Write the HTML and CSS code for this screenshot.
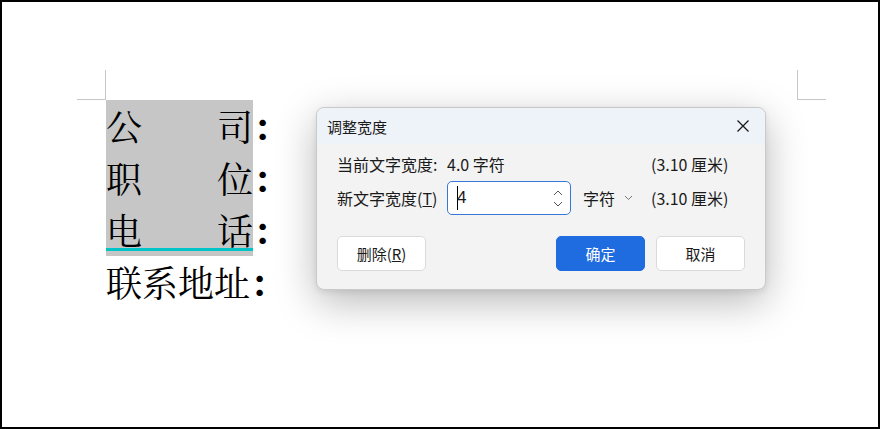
FILE: index.html
```html
<!DOCTYPE html>
<html lang="zh-CN">
<head>
<meta charset="utf-8">
<title>调整宽度</title>
<link rel="stylesheet" href="styles.css">
</head>
<body>
<div class="page">
  <div class="marks">
    <div class="mark mark-left"></div>
    <div class="mark mark-right"></div>
  </div>
  <div class="doc">
    <div class="line"><div class="label sel"><span>公</span><span>司</span></div><span class="colon">：</span></div>
    <div class="line"><div class="label sel"><span>职</span><span>位</span></div><span class="colon">：</span></div>
    <div class="line"><div class="label sel under"><span>电</span><span>话</span></div><span class="colon">：</span></div>
    <div class="line"><div class="label"><span>联系地址</span></div><span class="colon">：</span></div>
  </div>

  <div class="dialog">
    <div class="dlg-head">
      <span class="dlg-title">调整宽度</span>
      <svg class="close" width="14" height="14" viewBox="0 0 14 14"><path d="M1.5 1.5 L12.5 12.5 M12.5 1.5 L1.5 12.5" stroke="#1a1a1a" stroke-width="1.3" fill="none"/></svg>
    </div>
    <div class="dlg-body">
      <div class="row row1">
        <span class="lbl">当前文字宽度:</span>
        <span class="mid">4.0 字符</span>
        <span class="cm">(3.10 厘米)</span>
      </div>
      <div class="row row2">
        <span class="lbl">新文字宽度(<u>T</u>)</span>
        <span class="mid">
          <span class="input"><span class="caret"></span><span class="val">4</span>
            <span class="spin">
              <svg width="10" height="6" viewBox="0 0 10 6"><path d="M1 5 L5 1 L9 5" stroke="#555" stroke-width="1" fill="none"/></svg>
              <svg width="10" height="6" viewBox="0 0 10 6"><path d="M1 1 L5 5 L9 1" stroke="#555" stroke-width="1" fill="none"/></svg>
            </span>
          </span>
          <span class="unit">字符</span>
          <svg class="chev" width="9" height="6" viewBox="0 0 9 6"><path d="M1 1 L4.5 4.5 L8 1" stroke="#777" stroke-width="1" fill="none"/></svg>
        </span>
        <span class="cm">(3.10 厘米)</span>
      </div>
      <div class="btns">
        <button class="btn">删除(<u>R</u>)</button>
        <span class="spacer"></span>
        <button class="btn primary">确定</button>
        <button class="btn">取消</button>
      </div>
    </div>
  </div>
</div>
</body>
</html>
```
FILE: styles.css
```css
* { box-sizing: border-box; }
html, body { margin: 0; padding: 0; background: #fff; }
.page {
  position: relative;
  width: 880px;
  height: 429px;
  border: 2px solid #000;
  background: #fff;
  overflow: hidden;
}
.marks {
  display: flex;
  justify-content: space-between;
  margin-top: 68px;
  padding-left: 75px;
  padding-right: 52px;
  height: 30px;
}
.mark { width: 29px; height: 30px; }
.mark-left { border-right: 1px solid #c6c6c6; border-bottom: 1px solid #c6c6c6; }
.mark-right { border-left: 1px solid #c6c6c6; border-bottom: 1px solid #c6c6c6; }

.doc {
  padding-left: 104px;
  font-family: "Noto Serif CJK SC", "Noto Sans CJK SC", serif;
  font-size: 36px;
  color: #000;
}
.line {
  display: flex;
  align-items: center;
  height: 52px;
  line-height: 52px;
}
.label {
  width: 147px;
  height: 52px;
  display: flex;
  justify-content: space-between;
}
.label.sel { background: #c6c6c6; }
.label.under { position: relative; }
.label.under::after {
  content: "";
  position: absolute;
  left: 0; right: 0;
  bottom: 5px;
  height: 3px;
  background: #00c4c8;
}
.line:nth-child(4) .label { width: auto; }
.colon { font-weight: bold; }

.dialog {
  position: absolute;
  left: 314px;
  top: 105px;
  width: 450px;
  height: 183px;
  border: 1px solid #c9c9c9;
  border-radius: 8px;
  background: #f3f3f3;
  box-shadow: 0 12px 40px rgba(0,0,0,0.28), 0 2px 6px rgba(0,0,0,0.08);
  overflow: hidden;
  font-family: "Noto Sans CJK SC", "Noto Sans", sans-serif;
  font-size: 16px;
  color: #1a1a1a;
}
.dlg-head {
  height: 36px;
  background: #eef2f9;
  display: flex;
  align-items: center;
  justify-content: space-between;
  padding: 0 15px 0 10px;
}
.dlg-title { font-size: 15px; }
.close { display: block; }
.dlg-body { padding: 10px 20px 0 20px; }
.row { display: flex; align-items: center; }
.row1 { height: 20px; }
.row2 { height: 34px; margin-top: 7px; }
.lbl { width: 110px; white-space: nowrap; }
.mid { width: 204px; display: flex; align-items: center; white-space: nowrap; }
.cm { white-space: nowrap; }
.input {
  width: 124px;
  height: 34px;
  background: #fff;
  border: 1px solid #3a76d8;
  border-radius: 5px;
  display: flex;
  align-items: center;
  padding-left: 9px;
  position: relative;
}
.caret { width: 1px; height: 24px; background: #000; margin-right: -1px; }
.val { font-family: "Liberation Sans", sans-serif; font-size: 17px; }
.spin {
  margin-left: auto;
  margin-right: 7px;
  display: flex;
  flex-direction: column;
  gap: 5px;
}
.spin svg { display: block; }
.unit { margin-left: 12px; }
.chev { margin-left: 9px; }
.btns { display: flex; margin-top: 21px; gap: 11px; }
.spacer { flex: 1; }
.btn {
  width: 89px;
  height: 35px;
  border: 1px solid #dadada;
  border-radius: 5px;
  background: #fff;
  font-family: "Noto Sans CJK SC", "Noto Sans", sans-serif;
  font-size: 15px;
  color: #1a1a1a;
  padding: 0;
}
.btn.primary { background: #1f6ce0; border-color: #1f6ce0; color: #fff; }
```
